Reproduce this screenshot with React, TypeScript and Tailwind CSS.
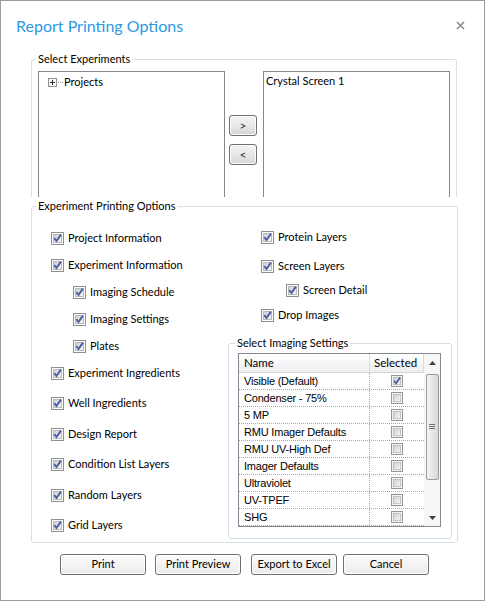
import React from "react";

type Opt = { label: string; indent?: boolean; mt: string };

const leftOptions: Opt[] = [
  { label: "Project Information", mt: "mt-0" },
  { label: "Experiment Information", mt: "mt-[11px]" },
  { label: "Imaging Schedule", indent: true, mt: "mt-[11px]" },
  { label: "Imaging Settings", indent: true, mt: "mt-[11px]" },
  { label: "Plates", indent: true, mt: "mt-[11px]" },
  { label: "Experiment Ingredients", mt: "mt-[11px]" },
  { label: "Well Ingredients", mt: "mt-[14px]" },
  { label: "Design Report", mt: "mt-[15px]" },
  { label: "Condition List Layers", mt: "mt-[14px]" },
  { label: "Random Layers", mt: "mt-[15px]" },
  { label: "Grid Layers", mt: "mt-[14px]" },
];

const imagingSettings: [string, boolean][] = [
  ["Visible (Default)", true],
  ["Condenser - 75%", false],
  ["5 MP", false],
  ["RMU Imager Defaults", false],
  ["RMU UV-High Def", false],
  ["Imager Defaults", false],
  ["Ultraviolet", false],
  ["UV-TPEF", false],
  ["SHG", false],
];

// vista-style checkbox
const CheckBox = ({ checked = true, size = 13 }: { checked?: boolean; size?: number }) => (
  <svg width={size} height={size} viewBox="0 0 13 13" className="shrink-0">
    <defs>
      <linearGradient id="cbfill" x1="0" y1="0" x2="1" y2="1">
        <stop offset="0" stopColor="#cbcdd0" />
        <stop offset="1" stopColor="#f8f8f8" />
      </linearGradient>
    </defs>
    <rect x="0.5" y="0.5" width="12" height="12" fill="#fdfdfd" stroke="#8e8f8f" />
    <rect x="2.5" y="2.5" width="8" height="8" fill="url(#cbfill)" stroke="#b9b9b9" />
    {checked && (
      <path d="M3.3 6.2 L5.5 9 L9.9 2.6" fill="none" stroke="#4a5ca3" strokeWidth="1.9" />
    )}
  </svg>
);

const OptionRow = ({ label, indent, mt }: Opt) => (
  <div className={`flex h-[16px] items-center gap-[4px] ${mt} ${indent ? "pl-[22px]" : ""}`}>
    <CheckBox />
    <span>{label}</span>
  </div>
);

const SmallButton = ({ label }: { label: string }) => (
  <button className="flex h-[21px] w-[28px] items-center justify-center rounded-[3px] border border-[#707070] bg-linear-to-b from-[#f4f4f4] via-[#e8e8e8] to-[#d5d5d5] text-[12px] leading-none text-[#333] shadow-[inset_0_0_0_1px_#fbfbfb]">
    {label}
  </button>
);

const DialogButton = ({ label, ml }: { label: string; ml: string }) => (
  <button
    className={`${ml} flex h-[21px] w-[86px] items-center justify-center rounded-[3px] border border-[#707070] bg-linear-to-b from-[#fcfcfc] to-[#ebebeb] text-[11px] text-black shadow-[inset_0_0_0_1px_#ffffff]`}>
    {label}
  </button>
);

const ScrollBar = () => (
  <div className="flex w-[16px] flex-col items-center bg-[#f6f6f6]">
    <div className="flex h-[17px] w-full items-center justify-center">
      <svg width="7" height="4" viewBox="0 0 7 4">
        <path d="M0 4 L3.5 0 L7 4 Z" fill="#404040" />
      </svg>
    </div>
    <div className="mt-[3px] flex h-[106px] w-[13px] items-center justify-center rounded-[2px] border border-[#9c9c9c] bg-linear-to-r from-[#f4f4f4] to-[#d8d8d8]">
      <svg width="6" height="6" viewBox="0 0 6 6">
        <path d="M0 0.5 H6 M0 2.5 H6 M0 4.5 H6" stroke="#707070" strokeWidth="1" />
      </svg>
    </div>
    <div className="mt-auto flex h-[17px] w-full items-center justify-center">
      <svg width="7" height="4" viewBox="0 0 7 4">
        <path d="M0 0 L3.5 4 L7 0 Z" fill="#404040" />
      </svg>
    </div>
  </div>
);

const ImagingTable = () => (
  <div className="flex border border-[#828790] bg-white">
    <div className="flex w-[185px] flex-col">
      <div className="flex h-[19px] border-b border-[#d5d5d5] bg-linear-to-b from-white to-[#eceef0] text-[11.5px]">
        <div className="flex w-[131px] items-center border-r border-[#dadada] pl-[5px]">Name</div>
        <div className="flex w-[54px] items-center border-r border-[#dadada] pl-[4px]">Selected</div>
      </div>
      {imagingSettings.map(([name, selected]) => (
        <div
          key={name}
          className="flex h-[17px] border-b border-dotted border-[#a8a8a8] font-['Liberation_Sans',Arial,sans-serif] text-[11px] tracking-[-0.2px] text-black">
          <div className="flex w-[131px] items-center border-r border-dotted border-[#a8a8a8] pl-[5px]">
            {name}
          </div>
          <div className="flex flex-1 items-center justify-center">
            <CheckBox checked={selected} size={12} />
          </div>
        </div>
      ))}
    </div>
    <ScrollBar />
  </div>
);

export default function App() {
  return (
    <div className="h-[602px] w-[486px] bg-white font-['Lato','Segoe_UI',sans-serif] text-[11px] text-black">
      <div className="flex h-[601px] w-[485px] flex-col border border-[#9c9c9c] bg-white">
        {/* title bar */}
        <div className="flex items-center justify-between pl-[15px] pr-[19px] pt-[13px]">
          <h1 className="text-[16px] leading-[24px] text-[#2c9ae0]">Report Printing Options</h1>
          <svg width="9" height="9" viewBox="0 0 9 9" className="mb-[2px]">
            <path d="M1 1 L8 8 M8 1 L1 8" stroke="#8c8c8c" strokeWidth="1.6" />
          </svg>
        </div>

        {/* Select Experiments */}
        <fieldset className="ml-[30px] mt-[13px] w-[426px] rounded-t-[3px] border border-b-0 border-[#d5dfe5]">
          <legend className="ml-[4px] px-[2px] leading-[16px]">Select Experiments</legend>
          <div className="flex px-[6px] pt-[4px]">
            <div className="h-[126px] w-[187px] border border-b-0 border-[#828790] pl-[9px] pt-[2px]">
              <div className="flex h-[16px] items-center">
                <svg width="9" height="9" viewBox="0 0 9 9">
                  <rect x="0.5" y="0.5" width="8" height="8" fill="#f7f7f7" stroke="#919191" />
                  <path d="M2 4.5 H7 M4.5 2 V7" stroke="#333" strokeWidth="1" />
                </svg>
                <svg width="6" height="9" viewBox="0 0 6 9" className="mr-[1px]">
                  <path d="M1 4.5 H2 M3 4.5 H4 M5 4.5 H6" stroke="#a0a0a0" strokeWidth="1" />
                </svg>
                <span>Projects</span>
              </div>
            </div>
            <div className="ml-[4px] flex w-[28px] flex-col gap-[8px] pt-[44px]">
              <SmallButton label=">" />
              <SmallButton label="<" />
            </div>
            <div className="ml-[6px] h-[126px] w-[187px] border border-b-0 border-[#828790] pl-[2px] pt-[1px]">
              <div className="flex h-[16px] items-center">Crystal Screen 1</div>
            </div>
          </div>
        </fieldset>

        {/* Experiment Printing Options */}
        <fieldset className="ml-[30px] mt-[1px] h-[345px] w-[427px] rounded-[3px] border border-[#d5dfe5]">
          <legend className="ml-[4px] px-[2px] leading-[16px]">Experiment Printing Options</legend>
          <div className="flex">
            <div className="flex w-[196px] flex-col pl-[19px] pt-[16px]">
              {leftOptions.map((o) => (
                <OptionRow key={o.label} {...o} />
              ))}
            </div>
            <div className="flex flex-col pt-[15px]">
              <div className="pl-[33px]">
                <OptionRow label="Protein Layers" mt="mt-0" />
                <OptionRow label="Screen Layers" mt="mt-[13px]" />
                <div className="pl-[25px]">
                  <OptionRow label="Screen Detail" mt="mt-[8px]" />
                </div>
                <OptionRow label="Drop Images" mt="mt-[9px]" />
              </div>
              <fieldset className="mt-[12px] w-[224px] rounded-[3px] border border-[#d5dfe5] pb-[11px] pl-[9px] pt-[2px]">
                <legend className="ml-[-3px] px-[2px] leading-[16px]">Select Imaging Settings</legend>
                <div className="w-[203px]">
                  <ImagingTable />
                </div>
              </fieldset>
            </div>
          </div>
        </fieldset>

        {/* dialog buttons */}
        <div className="mt-[11px] flex">
          <DialogButton label="Print" ml="ml-[59px]" />
          <DialogButton label="Print Preview" ml="ml-[9px]" />
          <DialogButton label="Export to Excel" ml="ml-[10px]" />
          <DialogButton label="Cancel" ml="ml-[6px]" />
        </div>
      </div>
    </div>
  );
}
